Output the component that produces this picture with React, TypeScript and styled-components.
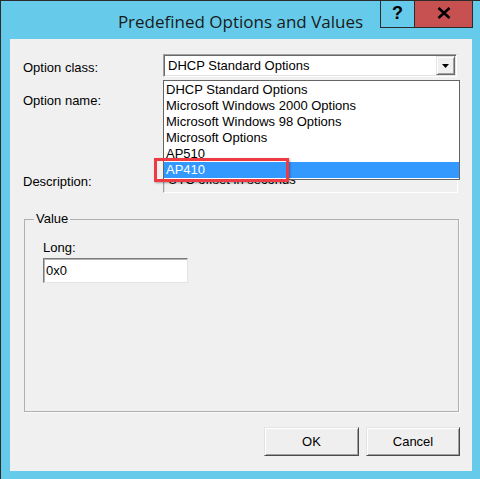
import React from 'react';
import styled, { createGlobalStyle } from 'styled-components';

const Global = createGlobalStyle`
  html, body { margin: 0; padding: 0; }
  body {
    width: 480px; height: 479px; overflow: hidden;
    font-family: "Liberation Sans", Arial, sans-serif;
    background: #66cbea;
  }
`;

const Window = styled.div`
  width: 480px;
  height: 479px;
  box-sizing: border-box;
  background: #66cbea;
  border-top: 1px solid #2b2b2b;
  border-left: 1px solid #2b2b2b;
  display: flex;
  flex-direction: column;
`;

const TitleBar = styled.div`
  height: 38px;
  flex: none;
  display: grid;
  grid-template-columns: 1fr auto 1fr;
  align-items: start;
`;

const Title = styled.div`
  grid-column: 2;
  margin-top: 9px;
  font-family: "Open Sans", "Noto Sans", sans-serif;
  font-size: 17px;
  line-height: 24px;
  color: #1a1a1a;
  white-space: nowrap;
`;

const Caption = styled.div`
  grid-column: 3;
  justify-self: end;
  display: flex;
  margin-top: -1px;
  margin-right: 7px;
`;

const CapBtn = styled.div<{ $close?: boolean }>`
  box-sizing: border-box;
  height: 28px;
  width: ${p => (p.$close ? 58 : 35)}px;
  background: ${p => (p.$close ? '#c75050' : '#66cbea')};
  border: 1px solid #2b2b2b;
  border-left-width: ${p => (p.$close ? 0 : 1)}px;
  display: flex;
  align-items: center;
  justify-content: center;
  font-family: "Liberation Sans", Arial, sans-serif;
  font-weight: bold;
  font-size: 18px;
  color: #000;
  padding-bottom: 2px;
`;

const Client = styled.div`
  flex: 1;
  margin: 0 8px 8px 9px;
  background: #f0f0f0;
  display: flex;
  flex-direction: column;
`;

const Row = styled.div<{ $top: number }>`
  display: flex;
  align-items: flex-start;
  margin-top: ${p => p.$top}px;
  padding-left: 13px;
`;

const Label = styled.div<{ $pt: number }>`
  width: 140px;
  padding-top: ${p => p.$pt}px;
  font-size: 13px;
  line-height: 15px;
  color: #000;
`;

const Combo = styled.div`
  position: relative;
  box-sizing: border-box;
  width: 294px;
  height: 23px;
  background: #fff;
  border: 1px solid;
  border-color: #a0a0a0 #ffffff #ffffff #a0a0a0;
  box-shadow: inset 1px 1px 0 #696969, inset -1px -1px 0 #e3e3e3;
  display: flex;
  align-items: center;
`;

const ComboText = styled.div`
  flex: 1;
  padding-left: 4px;
  font-size: 13px;
  line-height: 15px;
  color: #000;
  white-space: nowrap;
`;

const ArrowBtn = styled.div`
  box-sizing: border-box;
  width: 19px;
  height: 19px;
  margin-right: 1px;
  background: #f0f0f0;
  border: 1px solid;
  border-color: #e3e3e3 #696969 #696969 #e3e3e3;
  box-shadow: inset 1px 1px 0 #fff, inset -1px -1px 0 #a0a0a0;
  display: flex;
  align-items: center;
  justify-content: center;
`;

const DropList = styled.div`
  position: absolute;
  top: 25px;
  left: -1px;
  width: 297px;
  box-sizing: border-box;
  background: #fff;
  border: 1px solid #646464;
  padding: 1px 0;
  z-index: 2;
`;

const Item = styled.div<{ $sel?: boolean }>`
  position: relative;
  height: 16px;
  line-height: 16px;
  padding-left: 2px;
  font-size: 13px;
  white-space: nowrap;
  color: ${p => (p.$sel ? '#fff' : '#000')};
  background: ${p => (p.$sel ? '#3399ff' : 'transparent')};
`;

const Marker = styled.div`
  position: absolute;
  left: -10px;
  top: -4px;
  width: 135px;
  height: 24px;
  box-sizing: border-box;
  border: 3px solid #ee3b43;
  box-shadow: 1px 1px 2px rgba(0, 0, 0, 0.35);
`;

const ReadOnlyBox = styled.div`
  box-sizing: border-box;
  width: 295px;
  height: 23px;
  background: #f0f0f0;
  border: 1px solid;
  border-color: #a0a0a0 #ffffff #ffffff #a0a0a0;
  box-shadow: inset 1px 1px 0 #dcdcdc;
  padding: 1px 0 0 4px;
  font-size: 13px;
  line-height: 15px;
  color: #000;
  white-space: nowrap;
`;

const Group = styled.fieldset`
  box-sizing: border-box;
  margin: 18px 0 0 14px;
  width: 435px;
  height: 201px;
  padding: 0;
  border: 1px solid #b0b0b0;
  box-shadow: 1px 1px 0 #fafafa;
`;

const Legend = styled.legend`
  margin-left: 9px;
  padding: 0 2px;
  font-size: 13px;
  line-height: 16px;
  color: #000;
`;

const GroupBody = styled.div`
  padding-left: 18px;
  display: flex;
  flex-direction: column;
  align-items: flex-start;
`;

const SmallLabel = styled.div`
  margin-top: 13px;
  font-size: 13px;
  line-height: 15px;
  color: #000;
`;

const TextInput = styled.div`
  box-sizing: border-box;
  margin-top: 3px;
  width: 145px;
  height: 25px;
  background: #fff;
  border: 1px solid;
  border-color: #7a7a7a #e3e3e3 #e3e3e3 #7a7a7a;
  box-shadow: inset 1px 1px 0 #b4b4b4;
  padding-left: 2px;
  display: flex;
  align-items: center;
  font-size: 13px;
  color: #000;
`;

const ButtonRow = styled.div`
  display: flex;
  justify-content: flex-end;
  gap: 7px;
  margin-top: 15px;
  padding-right: 12px;
`;

const Button = styled.div<{ $w: number }>`
  box-sizing: border-box;
  width: ${p => p.$w}px;
  height: 29px;
  background: #efefef;
  border: 1px solid;
  border-color: #e3e3e3 #4a4a4a #4a4a4a #e3e3e3;
  box-shadow: inset 1px 1px 0 #ffffff, inset -1px -1px 0 #a0a0a0;
  display: flex;
  align-items: center;
  justify-content: center;
  font-size: 13px;
  color: #000;
`;

const options = [
  'DHCP Standard Options',
  'Microsoft Windows 2000 Options',
  'Microsoft Windows 98 Options',
  'Microsoft Options',
  'AP510',
  'AP410',
];

export default function App() {
  return (
    <>
      <Global />
      <Window>
        <TitleBar>
          <Title>Predefined Options and Values</Title>
          <Caption>
            <CapBtn>?</CapBtn>
            <CapBtn $close>
              <svg width="14" height="12" viewBox="0 0 14 12">
                <path d="M1.5 1 L12.5 11 M12.5 1 L1.5 11" stroke="#000" strokeWidth="2.6" fill="none" />
              </svg>
            </CapBtn>
          </Caption>
        </TitleBar>
        <Client>
          <Row $top={15}>
            <Label $pt={6}>Option class:</Label>
            <Combo>
              <ComboText>DHCP Standard Options</ComboText>
              <ArrowBtn>
                <svg width="7" height="4" viewBox="0 0 7 4">
                  <polygon points="0,0 7,0 3.5,4" fill="#000" />
                </svg>
              </ArrowBtn>
              <DropList>
                {options.map((o, i) => (
                  <Item key={o} $sel={i === options.length - 1}>
                    {o}
                    {i === options.length - 1 && <Marker />}
                  </Item>
                ))}
              </DropList>
            </Combo>
          </Row>
          <Row $top={13}>
            <Label $pt={3}>Option name:</Label>
            <Combo>
              <ComboText>002 Time Offset</ComboText>
            </Combo>
          </Row>
          <Row $top={57}>
            <Label $pt={4}>Description:</Label>
            <ReadOnlyBox>UTC offset in seconds</ReadOnlyBox>
          </Row>
          <Group>
            <Legend>Value</Legend>
            <GroupBody>
              <SmallLabel>Long:</SmallLabel>
              <TextInput>0x0</TextInput>
            </GroupBody>
          </Group>
          <ButtonRow>
            <Button $w={95}>OK</Button>
            <Button $w={94}>Cancel</Button>
          </ButtonRow>
        </Client>
      </Window>
    </>
  );
}
